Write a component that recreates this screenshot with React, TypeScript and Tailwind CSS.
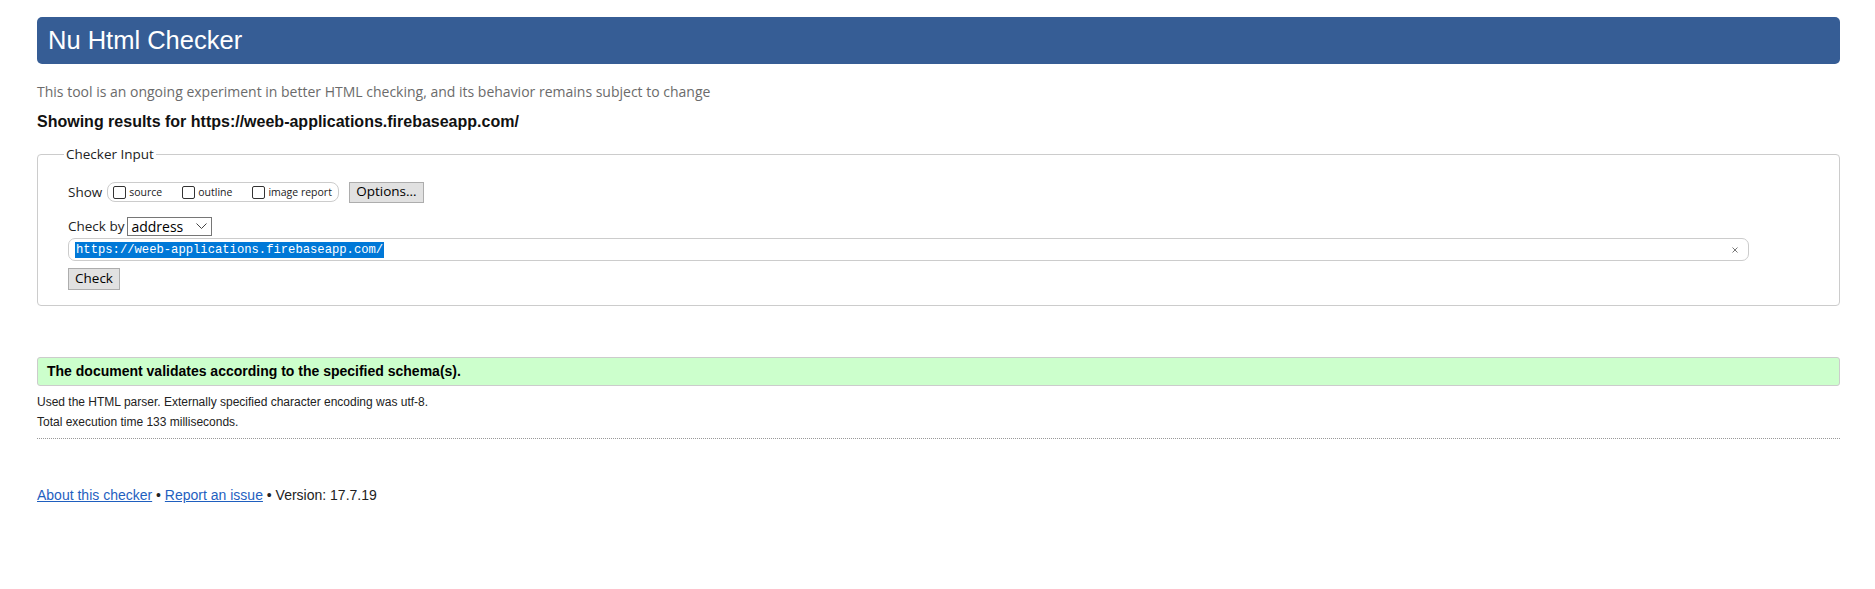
import { ReactNode } from 'react'

const arial = { fontFamily: '"Liberation Sans", Arial, sans-serif' }
const segoe = { fontFamily: '"Open Sans", "Noto Sans", sans-serif' }

function Box({ label }: { label: string }) {
  return (
    <span className="flex items-center">
      <span className="block w-[13px] h-[13px] border border-[#333] rounded-[2px] bg-white" />
      <span className="ml-[3px] text-[10.5px] text-[#222] leading-none">{label}</span>
    </span>
  )
}

function Btn({ children, className }: { children: ReactNode; className?: string }) {
  return (
    <button
      type="button"
      className={`flex items-center justify-center bg-[#e1e1e1] border border-[#adadad] text-[13.5px] text-black leading-none ${className ?? ''}`}
    >
      {children}
    </button>
  )
}

export default function App() {
  return (
    <div className="min-h-[589px] bg-white pl-[37px] pr-[35px] pt-[17px] text-black" style={arial}>
      {/* title bar */}
      <header className="h-[47px] rounded-[5px] bg-[#365d95] flex items-center pl-[11px]">
        <h1 className="text-[25.5px] text-white font-normal leading-none">Nu Html Checker</h1>
      </header>

      <p className="mt-[18px] text-[14px] leading-[20px] text-[#6b6b6b]" style={segoe}>
        This tool is an ongoing experiment in better HTML checking, and its behavior remains subject to change
      </p>

      <p className="mt-[10px] text-[16px] leading-[20px] font-bold text-[#111]">
        Showing results for https://weeb-applications.firebaseapp.com/
      </p>

      <fieldset className="mt-[12px] border border-[#cccccc] rounded-[4px] pl-[30px] pr-[30px] pt-[18px] pb-[15px]" style={segoe}>
        <legend className="ml-[-4px] px-[2px] text-[13.5px] leading-[20px] text-[#222]">Checker Input</legend>

        <div className="flex items-center h-[20px]">
          <span className="text-[13.5px] text-[#222] mr-[5px]">Show</span>
          <div className="flex items-center h-[20px] border border-[#cccccc] rounded-[8px] pl-[5px] pr-[6px] gap-[20px]">
            <Box label="source" />
            <Box label="outline" />
            <Box label="image report" />
          </div>
          <Btn className="ml-[10px] w-[75px] h-[21px]">Options…</Btn>
        </div>

        <div className="flex items-center mt-[15px] h-[19px]">
          <span className="text-[13.5px] text-[#222] mr-[3px]">Check by</span>
          <div className="relative flex items-center w-[85px] h-[19px] border border-[#767676] bg-white pl-[3px]">
            <span className="text-[14px] text-black leading-none">address</span>
            <svg className="absolute right-[4px] top-[5px]" width="11" height="7" viewBox="0 0 11 7" fill="none">
              <polyline points="0.5,0.5 5.5,5.5 10.5,0.5" stroke="#444" strokeWidth="1" />
            </svg>
          </div>
        </div>

        <div className="relative flex items-center mt-[2px] h-[23px] w-[1681px] border border-[#cccccc] rounded-[7px] bg-white pl-[6px]">
          <span
            className="bg-[#0078d7] text-white text-[12.2px] leading-[16px] px-[1px]"
            style={{ fontFamily: '"Liberation Mono", "Courier New", monospace' }}
          >
            https://weeb-applications.firebaseapp.com/
          </span>
          <svg className="absolute right-[10px] top-[8px]" width="6" height="6" viewBox="0 0 6 6">
            <path d="M0.5 0.5 L5.5 5.5 M5.5 0.5 L0.5 5.5" stroke="#777" strokeWidth="1" />
          </svg>
        </div>

        <Btn className="mt-[7px] w-[52px] h-[22px]">Check</Btn>
      </fieldset>

      <div className="mt-[51px] h-[29px] flex items-center bg-[#ccffcc] border border-[#cccccc] rounded-[3px] pl-[9px]">
        <strong className="text-[14px] text-black">The document validates according to the specified schema(s).</strong>
      </div>

      <p className="mt-[6px] text-[12px] leading-[20px] text-[#222]">
        Used the HTML parser. Externally specified character encoding was utf-8.
      </p>
      <p className="text-[12px] leading-[20px] text-[#222]">Total execution time 133 milliseconds.</p>

      <hr className="mt-[6px] border-0 border-t border-dotted border-[#999]" />

      <p className="mt-[46px] text-[14px] leading-[20px] text-[#222]">
        <a href="#" className="text-[#1f5fbf] underline">About this checker</a>
        {' • '}
        <a href="#" className="text-[#1f5fbf] underline">Report an issue</a>
        {' • Version: 17.7.19'}
      </p>
    </div>
  )
}
